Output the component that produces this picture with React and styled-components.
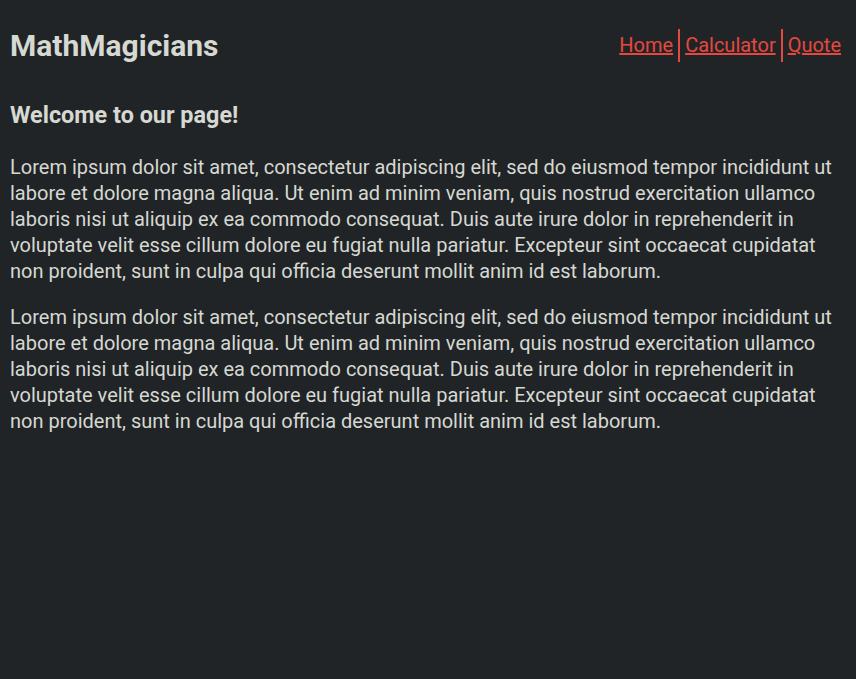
import styled, { createGlobalStyle } from "styled-components";

const GlobalStyle = createGlobalStyle`
    html, body {
        margin: 0;
        padding: 0;
        background-color: #212427;
        font-family: Roboto, "Liberation Sans", sans-serif;
        color: #d6d8d2;
    }
    * {
        box-sizing: border-box;
    }
`

const lorem = "Lorem ipsum dolor sit amet, consectetur adipiscing elit, sed do eiusmod tempor incididunt ut labore et dolore magna aliqua. Ut enim ad minim veniam, quis nostrud exercitation ullamco laboris nisi ut aliquip ex ea commodo consequat. Duis aute irure dolor in reprehenderit in voluptate velit esse cillum dolore eu fugiat nulla pariatur. Excepteur sint occaecat cupidatat non proident, sunt in culpa qui officia deserunt mollit anim id est laborum."

export default function App() {
    const links = ["Home", "Calculator", "Quote"]
    return (
        <Page>
            <GlobalStyle />
            <Header>
                <Logo>MathMagicians</Logo>
                <Nav>
                    {links.map((l, i) => (
                        <NavItem key={l} last={i === links.length - 1}>
                            <NavLink href="#">{l}</NavLink>
                        </NavItem>
                    ))}
                </Nav>
            </Header>
            <Main>
                <Title>Welcome to our page!</Title>
                <Text>{lorem}</Text>
                <Text>{lorem}</Text>
            </Main>
        </Page>
    )
}

const Page = styled.div`
    min-height: 679px;
    padding: 10px;
    background-color: #212427;
`
const Header = styled.header`
    height: 70px;
    display: flex;
    justify-content: space-between;
    align-items: center;
`
const Logo = styled.h1`
    margin: 0;
    font-size: 30px;
    font-weight: 700;
    color: #d6d8d2;
`
const Nav = styled.ul`
    list-style: none;
    margin: 0;
    padding: 0;
    display: flex;
    align-items: center;
`
const NavItem = styled.li`
    height: 33px;
    display: flex;
    align-items: center;
    padding: 0 5px;
    border-right: ${({ last }) => (last ? "none" : "2px solid #e5483f")};
`
const NavLink = styled.a`
    font-size: 20px;
    color: #e5483f;
    text-decoration: underline;
`
const Main = styled.main`
    padding-top: 22px;
`
const Title = styled.h3`
    margin: 0 0 26px;
    font-size: 23.4px;
    line-height: 26px;
    font-weight: 700;
`
const Text = styled.p`
    margin: 0 0 20px;
    font-size: 20px;
    line-height: 26px;
`
